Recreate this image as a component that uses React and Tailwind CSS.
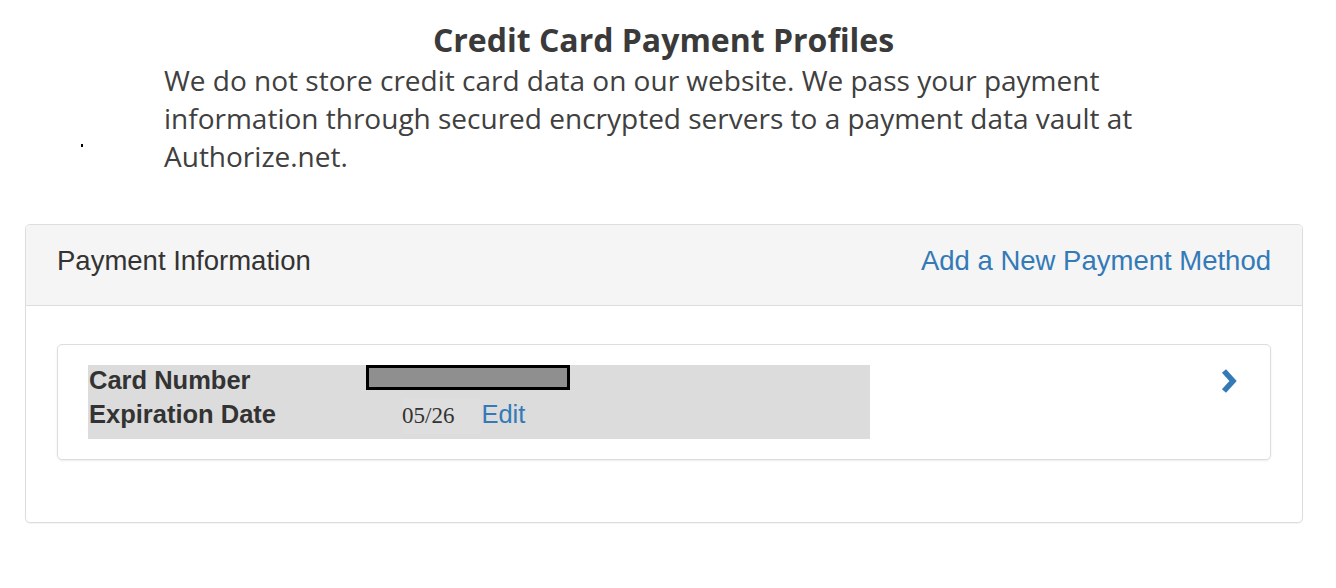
import React from 'react';

function Chevron() {
  return (
    <svg width="18" height="26" viewBox="0 0 18 26" className="mt-[3px]">
      <polyline points="4,3 13,13 4,23" fill="none" stroke="#337ab7" strokeWidth="5.5" strokeLinejoin="miter" />
    </svg>
  );
}

function App() {
  return (
    <div className="w-[1336px] h-[588px] bg-white text-[#333]">
      <div className="pt-[21px] pr-[9px] text-center font-['Open_Sans',sans-serif] font-bold text-[32px] leading-[38px] text-[#3a3a3a]">
        Credit Card Payment Profiles
      </div>
      <div className="flex mt-[2px]">
        <div className="w-[164px] flex items-end pb-[28px]">
          <span className="ml-[81px] w-[2px] h-[3px] bg-black"></span>
        </div>
        <p className="w-[1000px] font-['Open_Sans',sans-serif] text-[28px] leading-[38px] text-[#404040]">
          We do not store credit card data on our website. We pass your payment information through secured encrypted servers to a payment data vault at Authorize.net.
        </p>
      </div>

      <div className="mt-[49px] ml-[25px] mr-[33px] border border-[#dddddd] rounded-[5px] shadow-[0_1px_1px_rgba(0,0,0,0.05)] font-['Liberation_Sans',Arial,sans-serif]">
        <div className="h-[81px] bg-[#f5f5f5] border-b border-[#dddddd] rounded-t-[5px] px-[31px] pb-[8px] flex items-center justify-between text-[27.5px]">
          <span className="text-[#333]">Payment Information</span>
          <a className="text-[#337ab7]">Add a New Payment Method</a>
        </div>
        <div className="px-[31px] pt-[38px] pb-[62px]">
          <div className="border border-[#dddddd] rounded-[5px] shadow-[0_1px_2px_rgba(0,0,0,0.08)] pl-[30px] pr-[32px] pt-[20px] pb-[20px] flex justify-between items-start">
            <div className="w-[782px] bg-[#dcdcdc] pb-[5px] text-[25.5px]">
              <div className="flex items-start leading-[31px]">
                <span className="w-[278px] font-bold text-[#333] pl-[1px]">Card Number</span>
                <span className="w-[204px] h-[25px] border-[3px] border-black bg-[#8f8f8f]"></span>
              </div>
              <div className="flex items-baseline leading-[36px]">
                <span className="w-[314px] font-bold text-[#333] pl-[1px]">Expiration Date</span>
                <span className="font-['Liberation_Serif',serif] text-[23px] text-[#333] bg-[#dedede] pr-[27px]">05/26</span>
                <a className="text-[#337ab7]">Edit</a>
              </div>
            </div>
            <Chevron />
          </div>
        </div>
      </div>
    </div>
  );
}

export default App;
